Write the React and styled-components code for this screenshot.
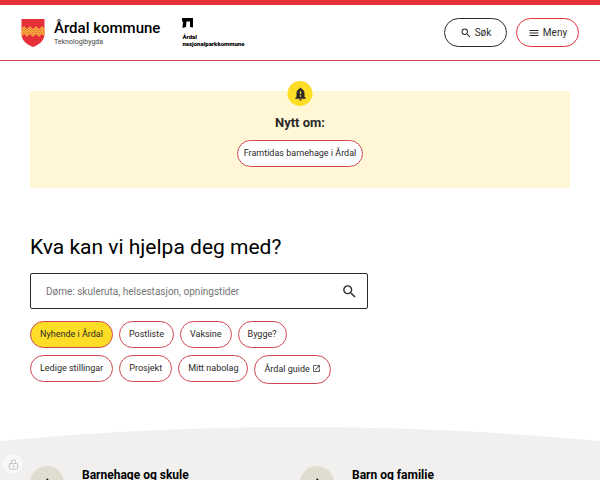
import React, { useState } from 'react';
import styled, { createGlobalStyle, css } from 'styled-components';
import { LockKeyhole } from 'lucide-react';
import {
    MdArrowForward,
    MdMenu,
    MdNotificationImportant,
    MdOpenInNew,
    MdSearch,
} from 'react-icons/md';

const colors = {
    red: '#e5303a',
    line: '#cf4650',
    yellow: '#fedd26',
    paleYellow: '#fff7d6',
    grey: '#f1f0ee',
    sand: '#e0ddd0',
    dark: '#2c2a29',
    black: '#000',
};

const fonts = {
    body: "Roboto, 'Liberation Sans', sans-serif",
};

const GlobalStyle = createGlobalStyle`
  html {
    scrollbar-width: none;
  }
  body {
    margin: 0;
    background: #fff;
    color: ${colors.dark};
    font-family: ${fonts.body};
    font-size: 9px;
  }
  *, *:before, *:after {
    box-sizing: border-box;
  }
`;

//-----------------

const StyledHeader = styled.header`
  display: flex;
  align-items: center;
  justify-content: space-between;
  height: 61px;
  padding: 0 21px;
  border-top: 5px solid ${colors.red};
  border-bottom: 1px solid ${colors.line};
`;

const StyledLogos = styled.div`
  display: flex;
  align-items: center;
  gap: 22px;
`;

const StyledBrand = styled.a`
  display: flex;
  align-items: center;
  gap: 9px;
  color: ${colors.black};
  text-decoration: none;
`;

const StyledBrandName = styled.span`
  display: block;
  font-size: 15px;
  font-weight: 500;
  line-height: 19px;
`;

const StyledBrandSub = styled.span`
  display: block;
  font-size: 7px;
  line-height: 9px;
  color: #444;
`;

const StyledPark = styled.a`
  display: flex;
  flex-direction: column;
  gap: 5px;
  color: ${colors.black};
  text-decoration: none;
  font-size: 6px;
  font-weight: 900;
  line-height: 7px;
`;

const StyledActions = styled.div`
  display: flex;
  gap: 9px;
`;

const StyledAction = styled.button`
  display: flex;
  align-items: center;
  justify-content: center;
  gap: 3px;
  width: 63px;
  height: 29px;
  padding: 0;
  border: 1px solid ${props => (props.$dark ? colors.dark : colors.red)};
  border-radius: 15px;
  background: #fff;
  color: ${colors.dark};
  font-family: inherit;
  font-size: 10px;
  cursor: pointer;
`;

//-----------------

const StyledMain = styled.main`
  padding: 30px 30px 0;
`;

const pill = css`
  display: flex;
  align-items: center;
  gap: 2px;
  border: 1px solid ${colors.line};
  border-radius: 15px;
  color: ${colors.dark};
  font-size: 9px;
  line-height: 11px;
  text-decoration: none;
  white-space: nowrap;
`;

const StyledNotice = styled.section`
  position: relative;
  display: flex;
  flex-direction: column;
  align-items: center;
  padding: 24px 20px 21px;
  background: ${colors.paleYellow};
`;

const StyledBell = styled.div`
  position: absolute;
  top: -10px;
  left: 50%;
  display: flex;
  align-items: center;
  justify-content: center;
  width: 25px;
  height: 25px;
  border-radius: 50%;
  background: ${colors.yellow};
  color: ${colors.dark};
  transform: translateX(-50%);
`;

const StyledNoticeTitle = styled.h2`
  margin: 0 0 9px;
  font-size: 13px;
  font-weight: 700;
  line-height: 16px;
`;

const StyledNoticeLink = styled.a`
  ${pill};
  padding: 7px 6px;
  background: #fff;
`;

const StyledTitle = styled.h1`
  margin: 47px 0 13px;
  color: ${colors.black};
  font-size: 21px;
  font-weight: 400;
  line-height: 25px;
`;

const StyledSearch = styled.form`
  display: flex;
  width: 63%;
  max-width: 338px;
  height: 36px;
  margin-bottom: 12px;
  border: 1px solid ${colors.dark};
  border-radius: 2px;
`;

const StyledInput = styled.input`
  flex: 1;
  min-width: 0;
  padding: 0 15px;
  border: 0;
  background: transparent;
  font-family: inherit;
  font-size: 10px;
  color: ${colors.dark};
  &::placeholder {
    color: #757575;
    opacity: 1;
  }
`;

const StyledSearchButton = styled.button`
  display: flex;
  align-items: center;
  justify-content: center;
  width: 36px;
  padding: 0;
  border: 0;
  background: transparent;
  color: ${colors.dark};
  cursor: pointer;
`;

const StyledTags = styled.ul`
  display: flex;
  flex-wrap: wrap;
  align-items: flex-start;
  gap: 7px 6px;
  max-width: 340px;
  margin: 0;
  padding: 0;
  list-style: none;
`;

const StyledTag = styled.a`
  ${pill};
  padding: ${props => (props.$external ? '8px 9px' : '7px 9px')};
  background: ${props => (props.$active ? colors.yellow : '#fff')};
  svg {
    align-self: flex-start;
  }
`;

//-----------------

const StyledCurve = styled.svg`
  display: block;
  width: 100%;
  height: 15px;
  margin-top: 43px;
`;

const StyledTopics = styled.section`
  display: grid;
  grid-template-columns: 1fr 1fr;
  padding: 24px 30px 30px;
  background: ${colors.grey};
`;

const StyledTopic = styled.a`
  display: flex;
  align-items: flex-start;
  gap: 18px;
  color: ${colors.black};
  text-decoration: none;
`;

const StyledTopicIcon = styled.span`
  display: flex;
  align-items: center;
  justify-content: center;
  width: 34px;
  height: 34px;
  border-radius: 50%;
  background: ${colors.sand};
`;

const StyledTopicName = styled.h3`
  margin: 1px 0 0;
  font-size: 12px;
  font-weight: 700;
  line-height: 16px;
`;

const StyledCookie = styled.button`
  position: fixed;
  bottom: 6px;
  left: 3px;
  display: flex;
  align-items: center;
  justify-content: center;
  width: 20px;
  height: 20px;
  padding: 0;
  border: 0;
  border-radius: 50%;
  background: #f8f8f7;
  color: #bcbcbc;
  cursor: pointer;
`;

//-----------------

const tags = [
    { name: 'Nyhende i Årdal', url: '#nyhende', active: true },
    { name: 'Postliste', url: '#postliste' },
    { name: 'Vaksine', url: '#vaksine' },
    { name: 'Bygge?', url: '#bygge' },
    { name: 'Ledige stillingar', url: '#stillingar' },
    { name: 'Prosjekt', url: '#prosjekt' },
    { name: 'Mitt nabolag', url: '#nabolag' },
    { name: 'Årdal guide', url: '#guide', external: true },
];

const topics = [
    { name: 'Barnehage og skule', url: '#barnehage' },
    { name: 'Barn og familie', url: '#familie' },
];

const Shield = () => (
    <svg width="24" height="28" viewBox="0 0 24 28" aria-hidden="true">
        <path fill={colors.red} d="M0.5 0H23.5V15C23.5 21.5 18.5 25.5 12 28C5.5 25.5 0.5 21.5 0.5 15Z" />
        <g fill="none" stroke="#f8b83c" strokeWidth="1.1">
            <path d="M0.5 10.5L3 8L6 11L9 8L12 11L15 8L18 11L21 8L23.5 10.5" />
            <path d="M0.5 12.5L3 10L6 13L9 10L12 13L15 10L18 13L21 10L23.5 12.5" />
            <path d="M0.5 14.5L3 12L6 15L9 12L12 15L15 12L18 15L21 12L23.5 14.5" />
            <path d="M0.5 16.5L3 14L6 17L9 14L12 17L15 14L18 17L21 14L23.5 16.5" />
        </g>
    </svg>
);

const ParkMark = () => (
    <svg width="12" height="10" viewBox="0 0 12 10" aria-hidden="true">
        <path d="M0 0H11V9.5L8 9V3.5H4.5L4 9L0.5 10L1 3.5H0Z" />
    </svg>
);

const Header = () => (
    <StyledHeader>
        <StyledLogos>
            <StyledBrand href="#home">
                <Shield />
                <span>
                    <StyledBrandName>Årdal kommune</StyledBrandName>
                    <StyledBrandSub>Teknologibygda</StyledBrandSub>
                </span>
            </StyledBrand>
            <StyledPark href="#nasjonalpark">
                <ParkMark />
                <span>
                    Årdal
                    <br />
                    nasjonalparkkommune
                </span>
            </StyledPark>
        </StyledLogos>
        <StyledActions>
            <StyledAction type="button" $dark>
                <MdSearch size={12} />
                Søk
            </StyledAction>
            <StyledAction type="button">
                <MdMenu size={12} />
                Meny
            </StyledAction>
        </StyledActions>
    </StyledHeader>
);

const Search = () => {
    const [query, setQuery] = useState('');

    return (
        <StyledSearch role="search" onSubmit={e => e.preventDefault()}>
            <StyledInput
                type="text"
                aria-label="Søk"
                placeholder="Døme: skuleruta, helsestasjon, opningstider"
                value={query}
                onChange={e => setQuery(e.target.value)}
            />
            <StyledSearchButton type="submit" aria-label="Søk">
                <MdSearch size={17} />
            </StyledSearchButton>
        </StyledSearch>
    );
};

const App = () => (
    <>
        <GlobalStyle />
        <Header />
        <StyledMain>
            <StyledNotice>
                <StyledBell>
                    <MdNotificationImportant size={16} />
                </StyledBell>
                <StyledNoticeTitle>Nytt om:</StyledNoticeTitle>
                <StyledNoticeLink href="#framtidas">Framtidas barnehage i Årdal</StyledNoticeLink>
            </StyledNotice>
            <StyledTitle>Kva kan vi hjelpa deg med?</StyledTitle>
            <Search />
            <StyledTags>
                {tags.map(({ name, url, active, external }) => (
                    <li key={name}>
                        <StyledTag href={url} $active={active} $external={external}>
                            {name}
                            {external && <MdOpenInNew size={9} />}
                        </StyledTag>
                    </li>
                ))}
            </StyledTags>
        </StyledMain>
        <StyledCurve viewBox="0 0 600 15" preserveAspectRatio="none" aria-hidden="true">
            <path fill={colors.grey} d="M0 14Q300 -14 600 14V15H0Z" />
        </StyledCurve>
        <StyledTopics>
            {topics.map(({ name, url }) => (
                <StyledTopic key={name} href={url}>
                    <StyledTopicIcon>
                        <MdArrowForward size={14} />
                    </StyledTopicIcon>
                    <StyledTopicName>{name}</StyledTopicName>
                </StyledTopic>
            ))}
        </StyledTopics>
        <StyledCookie type="button" aria-label="Personvern">
            <LockKeyhole size={11} strokeWidth={2} />
        </StyledCookie>
    </>
);

export default App;
